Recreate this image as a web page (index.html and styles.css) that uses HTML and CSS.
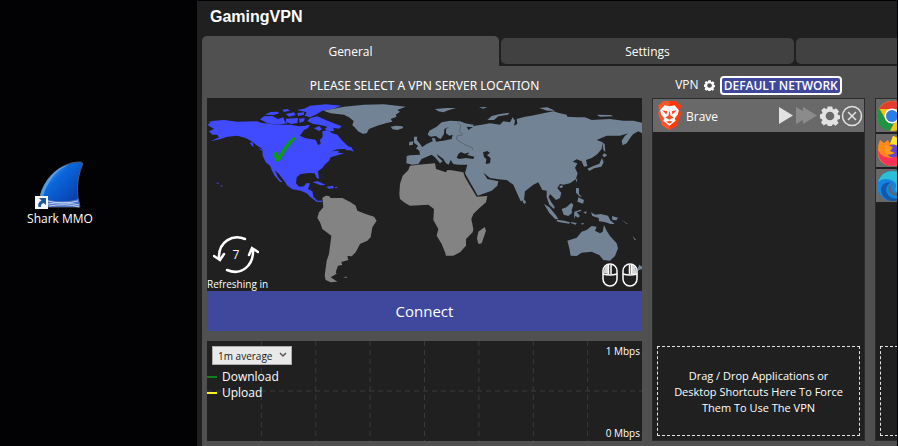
FILE: index.html
```html
<!DOCTYPE html>
<html lang="en">
<head>
<meta charset="utf-8">
<title>GamingVPN</title>
<link rel="stylesheet" href="styles.css">
</head>
<body>
<svg class="defs" aria-hidden="true">
  <symbol id="gear" viewBox="0 0 20 20">
    <path fill-rule="evenodd" d="M7.7 0.5h4.6l.5 2.6 1 .5 2.3-1.4 3 3.2-1.5 2.2.4 1.1 2 .8v3.4l-2.2.7-.6 1.2 1.4 2.3-3 2.6-2.2-1.4-1.1.4-.6 2.3H8l-.7-2.4-1.2-.5-2.3 1.4-2.8-3 1.4-2.3-.5-1.1L0 12.4V8.3l2-.6.6-1.2L1.2 4.4 4 1.8l2.2 1.3 1-.5zM10 5.7a4.3 4.3 0 1 0 0 8.6 4.3 4.3 0 0 0 0-8.6z"/>
  </symbol>
</svg>
<div class="desktop">
  <aside class="icons">
    <a class="shortcut" href="#shark">
      <svg class="fin" viewBox="0 0 50 48" aria-hidden="true">
        <defs>
          <linearGradient id="finFill" x1="0" y1="0" x2="1" y2="1">
            <stop offset="0.2" stop-color="#4d9df0"/><stop offset="0.4" stop-color="#0b66dc"/><stop offset="1" stop-color="#07329a"/>
          </linearGradient>
        </defs>
        <path d="M3 46C6 20 24 1 45 1q4 0 2 4c-5 12-6 28-2 41z" fill="url(#finFill)" stroke="#555a60"/>
        <path d="M5 34C9 19 20 7 33 4 22 9 12 20 8 36z" fill="#65b1f5" opacity=".7"/>
        <path d="M13 39q17 3 31-1l1 8H13z" fill="#4d72c4"/>
        <path d="M13 40q14 4 30 0M13 43q16-3 31 1M14 45q18-3 30 1" fill="none" stroke="#c0d3f4"/>
        <path d="M0 35h13v13H0z" fill="#f4f6f8"/>
        <path d="M4 37h7v7l-2.500-2Q5.500 43 6 46H3.500Q2 42 6.500 39.500z" fill="#1f579f"/>
      </svg>
      <span>Shark MMO</span>
    </a>
  </aside>
  <main class="window">
    <h1 class="title">GamingVPN</h1>
    <nav class="tabs">
      <button class="tab active">General</button>
      <button class="tab">Settings</button>
      <button class="tab" aria-label="More"></button>
    </nav>
    <div class="panel">
      <h2 class="head wide-head">PLEASE SELECT A VPN SERVER LOCATION</h2>
      <div class="head">VPN
        <svg class="small-gear" aria-hidden="true"><use href="#gear"/></svg>
        <button class="network">DEFAULT NETWORK</button>
      </div>
      <div class="head"></div>

      <section class="location">
        <div class="map">
          <svg class="world" viewBox="0 0 1305 579" role="img" aria-label="World map">
            <g class="selected" transform="translate(-9 -12)">
              <path d="M10 92 20 86 12 84 30 80 60 78 100 83 160 82 170 86 220 92 260 92 285 97 300 96 318 92 312 102 300 108 288 125 305 133 335 137 342 153 350 150 348 138 356 128 355 112 372 108 385 118 400 122 412 137 425 150 435 158 425 165 400 166 382 172 405 170 402 176 420 178 395 185 380 190 375 200 362 212 355 222 342 232 345 255 338 252 332 238 315 237 290 240 278 250 276 268 285 278 300 277 306 268 318 268 312 285 325 292 328 308 340 320 355 320 352 325 338 323 318 308 308 298 290 290 265 286 250 275 243 264 225 240 212 228 222 250 235 265 228 264 212 245 203 228 198 215 185 205 176 185 175 165 160 155 140 140 125 132 100 125 70 128 50 135 20 142 45 130 40 122 25 122 15 112 30 105z"/>
              <path d="M168 76 180 67 205 66 222 75 238 70 242 82 250 88 220 92 190 88zM182 62 200 54 222 53 225 58 210 63zM245 60 270 55 275 63 255 68zM246 74 282 72 280 87 262 90 246 84zM235 47 250 45 258 50 240 54zM278 48 300 44 318 35 365 31 412 35 385 45 355 50 335 62 318 70 302 65 308 55zM280 57 300 55 300 62 282 66zM285 74 302 72 300 82 287 87zM318 72 340 67 365 78 382 85 395 90 413 97 405 104 388 101 390 111 376 112 362 106 370 98 345 92 328 90 310 81zM425 160 441 158 450 173 438 169 425 169zM330 103 346 96 354 106 345 111zM325 264 342 262 365 273 350 274zM367 278 388 275 389 283 374 284zM393 279h7v3h-7zM38 266h6v3h-6zM48 272 57 276 53 278zM137 146 145 145 149 158 144 156zM164 163 180 169 182 172 170 168z"/>
            </g>
            <g class="region" transform="translate(-9 -12)">
              <path d="M358 50 385 45 420 38 480 32 540 31 605 38 580 48 588 53 575 62 578 68 560 75 565 83 545 88 520 95 495 105 488 118 476 119 462 112 452 100 445 94 449 81 435 70 420 62 380 58zM560 98 575 95 595 97 598 102 580 108 566 106zM630 128 640 128 638 137 650 152 655 160 636 165 642 155 630 146zM616 144 628 142 626 153 615 154z"/>
            </g>
            <g class="region" transform="translate(609 -12)">
              <path d="M0 184 30 182 28 170 18 163 38 158 50 150 68 142 66 132 75 133 78 143 100 140 125 135 128 122 118 125 108 118 108 105 118 98 103 105 102 120 92 135 85 132 78 126 62 128 53 122 58 110 80 98 95 85 120 80 150 82 165 88 190 92 192 100 170 98 175 108 195 95 215 92 240 88 270 92 280 82 300 85 308 70 315 80 312 95 322 90 320 75 345 68 365 65 400 58 430 52 450 58 470 62 472 68 500 70 525 70 545 78 600 75 640 80 670 80 696 86 696 118 685 112 670 120 662 130 650 148 638 154 635 140 645 125 655 118 630 125 590 125 560 138 578 145 575 165 560 182 545 192 528 198 532 216 522 218 515 202 500 196 488 203 502 208 495 222 503 238 498 255 480 268 460 272 450 270 442 282 454 297 450 312 438 318 430 310 420 300 416 310 424 325 434 338 432 345 418 332 410 310 410 290 397 288 385 265 370 272 345 292 342 318 332 322 318 290 310 272 290 258 265 256 240 252 220 236 232 255 265 262 262 275 245 290 203 305 195 290 180 265 165 238 172 212 145 212 130 210 122 198 116 212 108 208 100 195 80 180 85 190 98 202 90 208 75 190 65 182 50 188 35 195 25 210 8 212 -11 208 -10 186z"/>
              <path d="M75 45 110 42 138 42 115 49 100 55 85 52zM207 40 232 39 220 44zM232 78 245 66 270 60 298 56 294 62 265 67 252 78zM388 42 412 40 435 50 412 50zM560 62 602 63 610 67 570 68zM577 145 584 150 586 174 580 168zM582 178 592 183 583 190 577 185zM576 192 581 205 574 218 552 223 538 231 532 224 552 215 568 209zM340 314 348 323 345 331 338 324zM453 274 460 276 454 283 447 279zM497 254 502 256 499 266zM498 282 507 283 507 300 516 309 508 307 498 296zM505 310 522 318 519 329 502 323z"/>
            </g>
            <g class="water" transform="translate(609 -12)">
              <path d="M140 191 145 180 153 174 164 179 178 175 172 183 193 188 190 195 168 192 148 195zM219 175 232 171 240 177 231 183 242 193 240 208 227 210 229 196 222 189z"/>
            </g>
            <path class="border" transform="translate(609 -12)" d="M142 82 152 95 149 112 158 123 142 125 139 135 153 145 170 155 187 161 188 168"/>
            <g class="unserved" transform="translate(609 -12)">
              <path d="M0 215 25 212 75 208 78 225 108 235 112 228 125 229 160 235 165 250 180 275 200 308 232 306 228 325 205 345 190 360 184 375 190 405 188 415 168 435 168 455 150 475 130 485 108 485 105 475 95 450 80 425 85 405 70 378 72 345 55 332 0 335-15 327-30 315-32 300-30 270-22 245-5 228zM224 399 228 410 215 448 205 450 201 433 205 413z"/>
            </g>
            <g class="unserved" transform="translate(-9 288)">
              <path d="M355 12 365 5 375 6 380 12 395 12 415 12 440 25 455 35 460 50 485 60 510 68 518 80 505 100 500 130 490 140 468 150 455 175 443 187 430 186 433 198 412 204 415 213 402 215 395 235 398 239 380 250 400 263 380 265 365 258 362 245 368 200 375 180 382 125 355 105 348 85 340 72 345 55 358 40zM417 249 430 248 427 252z"/>
            </g>
            <g class="region" transform="translate(609 276)">
              <path d="M472 152 500 143 515 125 530 120 545 108 560 110 555 122 570 130 578 125 582 105 590 122 600 138 620 160 624 175 615 198 600 212 580 210 568 195 560 192 545 185 515 188 500 198 482 197 478 175zM402 42 418 52 438 76 445 87 436 88 418 69zM441 89 462 92 480 97 478 101 450 97 440 94zM482 96 500 99 497 104 484 100zM455 57 469 52 484 38 490 45 485 60 486 69 475 78 461 74zM493 65 512 59 514 63 500 67 510 78 504 83 496 77 492 88zM520 67 530 64 528 72zM543 67 556 74 572 72 594 77 601 91 614 102 602 102 584 96 567 94 566 84 547 78zM606 78 624 83 619 91 607 90zM512 101 523 98 518 104zM635 90 644 95 655 103 650 101zM667 137 678 149 674 150zM688 224 696 230 696 237 680 243z"/>
            </g>
            <path class="tick" transform="translate(-9 -12)" d="M208 180q3-8 11-5l5 11q20-39 44-56 8-2 7 4-26 26-46 63-7 10-14 3z"/>
          </svg>
          <div class="refresh">
            <div class="spinner">
              <svg viewBox="0 0 46 40" aria-hidden="true">
                <path d="M32 4C20-1 5 6 6 24M1 21l6 4 4-6M14 35c14 6 27-4 26-21M36 20l3-7 6 4"/>
              </svg>
              <span>7</span>
            </div>
            Refreshing in
          </div>
          <div class="mice" aria-hidden="true">
            <svg viewBox="0 0 16 24"><path class="pressed" d="M2 10V8q0-5 4-6v9z"/><rect x="1" y="1" width="14" height="22" rx="7"/><path d="M1 11q7 2 14 0M6.500 2v9M9 2v9"/></svg>
            <svg viewBox="0 0 16 24"><path class="pressed" d="M10 2q4 1 4 6v3h-4z"/><rect x="1" y="1" width="14" height="22" rx="7"/><path d="M1 11q7 2 14 0M7.500 2v9M9.500 2v9"/></svg>
          </div>
        </div>
        <button class="connect">Connect</button>
        <div class="chart">
          <svg class="lines" aria-hidden="true">
            <line x1="12.5%" x2="12.5%" y1="0" y2="100%"/><line x1="25%" x2="25%" y1="0" y2="100%"/><line x1="37.5%" x2="37.5%" y1="0" y2="100%"/><line x1="50%" x2="50%" y1="0" y2="100%"/><line x1="62.5%" x2="62.5%" y1="0" y2="100%"/><line x1="75%" x2="75%" y1="0" y2="100%"/><line x1="87.5%" x2="87.5%" y1="0" y2="100%"/><line x1="0" x2="100%" y1="50%" y2="50%"/>
          </svg>
          <div class="legend">
            <div class="picker">
              <select aria-label="Average period"><option>1m average</option></select>
              <svg viewBox="0 0 8 6" aria-hidden="true"><path d="m1 1 3 3 3-3"/></svg>
            </div>
            <div class="key download">Download</div>
            <div class="key upload">Upload</div>
          </div>
          <div class="scale"><span>1 Mbps</span><span>0 Mbps</span></div>
        </div>
      </section>

      <section class="list">
        <div class="app">
          <svg class="logo" viewBox="0 0 24 28" aria-hidden="true">
            <path d="m6 0h12l3 3 2 1-1 5 1 3-4 12-7 4-7-4L1 12l1-3L1 4l2-1z" fill="#fb542b"/>
            <path d="M12 28V0h6l3 3 2 1-1 5 1 3-4 12z" fill="#ff3a08"/>
            <path d="m7 4 5 1 5-1 4 5-1 4-3 4 1 2-6 5-6-5 1-2-3-4-1-4z" fill="#fff"/>
            <path d="m5 9 5 1-1 3zM19 9l-5 1 1 3zM12 9l1 5 3 2-4 2-4-2 3-2zM9 20l3-1 3 1-3 2z" fill="#fb4a20"/>
          </svg>
          <span class="name">Brave</span>
          <button aria-label="Launch"><svg viewBox="0 0 14 17"><path d="m0 0 14 8.500L0 17z"/></svg></button>
          <button class="off wide" aria-label="Launch all" disabled><svg viewBox="0 0 21 17"><path d="m0 0 7 4V0l14 8.500L7 17v-4l-7 4z"/></svg></button>
          <button class="cog" aria-label="Settings"><svg><use href="#gear"/></svg></button>
          <button class="close" aria-label="Remove"><svg viewBox="0 0 22 22"><circle cx="11" cy="11" r="9.500"/><path d="m7 7 8 8M15 7l-8 8"/></svg></button>
        </div>
        <p class="drop">Drag / Drop Applications or Desktop Shortcuts Here To Force Them To Use The VPN</p>
      </section>

      <section class="list clipped">
        <div class="app">
          <svg class="browser" viewBox="0 0 30 30" aria-hidden="true"><circle cx="15" cy="15" r="15" fill="#fbc116"/><path d="M2 8Q7 0 15 0q9 0 13 8H15z" fill="#e33b2e"/><path d="M2 7 9 19q3 4 8 3l-4 8Q0 28 0 15q0-5 2-8z" fill="#229342"/><circle cx="15" cy="15" r="7.500" fill="#fff"/><circle cx="15" cy="15" r="6" fill="#2a7de9"/></svg>
        </div>
        <div class="app">
          <svg class="browser" viewBox="0 0 30 30" aria-hidden="true"><path d="m3 4 4 3 4-3 2 4 3-8q14 3 14 16 0 14-15 14Q0 29 1 14q0-6 2-10z" fill="#ff8a16"/><path d="M1 14q4 8 13 8 9-1 14-6-1 14-14 14Q1 28 1 14z" fill="#ff3159"/><path d="M13 8 16 0q10 3 13 13l-9-3z" fill="#ffe226"/><circle cx="16" cy="15" r="6.500" fill="#6542d2"/><path d="m8 9 8 2-3 4 5 2q-8 4-10-1z" fill="#ff9c18"/></svg>
        </div>
        <div class="app">
          <svg class="browser" viewBox="0 0 30 30" aria-hidden="true"><circle cx="15" cy="15" r="15" fill="#1683df"/><path d="M1 11Q5 0 15 0q15 0 15 15 0 6-8 6-5 0-3-5 1-5-5-7Q6 6 1 11z" fill="#2cc0d8"/><path d="M14 11q-8 6-3 13 5 6 14 2-4 5-11 4Q5 28 4 19q0-8 10-8z" fill="#1259a8"/><path d="M16 12q-4 3-1 8 4 4 11 2-8 5-13 0-4-6 3-10z" fill="#5c6670"/></svg>
        </div>
        <p class="drop">Drag / Drop Applications or Desktop Shortcuts Here To Force Them To Use The Default</p>
      </section>
    </div>
  </main>
</div>
</body>
</html>
```
FILE: styles.css
```css
* { box-sizing: border-box; }
body {
  margin: 0;
  background: #020204;
  color: #fff;
  font: 12px/16px "Open Sans", "Noto Sans", sans-serif;
}
button, select { font: inherit; color: inherit; }
button { border: 0; padding: 0; background: none; }
svg { display: block; }
.defs { position: absolute; width: 0; height: 0; }

.desktop {
  display: grid;
  grid-template-columns: 197fr 700fr;
  min-height: 100vh;
  padding: 1px 1px 0 0;
}
.icons { padding: 160px 0 0 20px; }
.shortcut {
  display: flex;
  flex-direction: column;
  align-items: center;
  width: 80px;
  gap: 2px;
  color: #fff;
  text-decoration: none;
  white-space: nowrap;
}
.fin { width: 50px; height: 48px; }

.window {
  display: flex;
  flex-direction: column;
  min-width: 0;
  overflow: hidden;
  padding-left: 5px;
  background: #202020;
}
.title {
  margin: 0;
  padding: 6px 8px 9px;
  font: bold 16px/20px "Liberation Sans", sans-serif;
}
.tabs {
  display: grid;
  grid-template-columns: 297fr 293fr 101fr;
  gap: 2px;
  height: 30px;
}
.tab {
  height: 26px;
  margin-top: 2px;
  padding-top: 1px;
  border-radius: 5px;
  background: #414141;
}
.tab.active {
  height: 30px;
  margin: 0;
  padding-top: 2px;
  border-radius: 5px 5px 0 0;
  background: #505050;
}
.tab:last-child { border-radius: 5px 0 0 5px; }

.panel {
  flex: 1;
  display: grid;
  grid-template-columns: 435fr 213fr 22fr;
  grid-template-rows: 32px auto;
  align-content: start;
  column-gap: 10px;
  padding: 0 0 5px 5px;
  background: #505050;
}
.head {
  display: flex;
  align-items: center;
  justify-content: center;
  gap: 5px;
  margin: 0;
  padding-top: 6px;
  font-size: 12px;
  font-weight: 400;
  white-space: nowrap;
}
.wide-head { padding-top: 8px; font-family: "Noto Sans", "Open Sans", sans-serif; }
.small-gear { width: 11px; height: 11px; fill: #fff; }
.network {
  height: 19px;
  padding: 0 2px;
  border: 2px solid #fff;
  border-radius: 4px;
  background: #40489d;
  font-weight: 600;
  line-height: 15px;
}

.location, .list { min-width: 0; }
.map { position: relative; background: #202020; }
.world { width: 100%; height: auto; }
.selected { fill: #404bff; }
.region { fill: #728396; }
.unserved { fill: #838383; }
.water { fill: #202020; }
.border { fill: none; stroke: #4e5964; stroke-width: 2; }
.tick { fill: #0a9d0d; }
.refresh {
  position: absolute;
  left: 0;
  bottom: 0;
  font-size: 10px;
  line-height: 14px;
}
.spinner { position: relative; width: 46px; height: 40px; margin: 0 0 2px 6px; }
.spinner svg { width: 46px; height: 40px; fill: none; stroke: #fff; stroke-width: 2.5; stroke-linecap: round; }
.spinner span { position: absolute; inset: 0; font-size: 12px; line-height: 40px; text-align: center; }
.mice { position: absolute; right: 4px; bottom: 4px; display: flex; gap: 4px; }
.mice svg { width: 16px; height: 24px; fill: none; stroke: #fff; stroke-width: 1.5; }
.mice .pressed { fill: #d5d5d5; stroke: none; }
.connect {
  display: block;
  width: 100%;
  height: 40px;
  background: #40489d;
  font-size: 15px;
}
.chart {
  position: relative;
  display: flex;
  justify-content: space-between;
  height: 100px;
  margin-top: 10px;
  background: #202020;
}
.lines { position: absolute; inset: 0; width: 100%; height: 100%; }
.lines line { stroke: #3a3a3a; stroke-dasharray: 5 4; }
.legend, .scale { position: relative; }
.picker { position: relative; width: 80px; margin: 5px 0 4px 5px; }
.picker select {
  display: block;
  appearance: none;
  width: 100%;
  height: 19px;
  padding: 0 5px;
  border: 1px solid #adadad;
  border-radius: 0;
  background: #e9e9e9;
  color: #181818;
  font-size: 10px;
}
.picker svg { position: absolute; right: 5px; top: 6px; width: 8px; height: 6px; fill: none; stroke: #555; stroke-width: 1.5; }
.key { display: flex; align-items: center; gap: 5px; }
.key::before { content: ""; width: 10px; height: 2px; background: #0d8019; }
.upload::before { background: #f6f21b; }
.scale {
  display: flex;
  flex-direction: column;
  justify-content: space-between;
  padding: 2px 2px 0;
  font-size: 10px;
}

.list {
  display: flex;
  flex-direction: column;
  border: 1px solid #2b2b2b;
  background: #202020;
}
.app {
  display: flex;
  align-items: center;
  height: 33px;
  flex: none;
  padding: 0 1px 0 4px;
  background: #696969;
}
.logo { width: 25px; height: 29px; flex: none; }
.name { flex: 1; margin-left: 4px; padding-top: 2px; }
.app button { width: 17px; }
.app button svg { width: 14px; height: 17px; fill: #e2e2e2; }
.app .wide { width: 23px; }
.app .wide svg { width: 21px; }
.app .off svg { fill: #8b8b8b; }
.app .cog { width: 22px; }
.app .cog svg { width: 20px; height: 20px; margin-left: 1px; }
.app .close { width: 22px; }
.app .close svg { width: 22px; height: 22px; fill: none; stroke: #e2e2e2; stroke-width: 1.5; }
.drop {
  display: flex;
  align-items: center;
  justify-content: center;
  height: 90px;
  margin: auto 4px 4px;
  padding: 2px 12px 0;
  border: 1px dashed #e4e4e4;
  font-size: 11px;
  text-align: center;
}
.clipped { overflow: hidden; border-right: 0; }
.clipped .app { width: 211px; padding-left: 1px; }
.clipped .app + .app { margin-top: 2px; }
.clipped .drop { width: 203px; flex: none; }
.browser { width: 30px; height: 30px; flex: none; }
```
